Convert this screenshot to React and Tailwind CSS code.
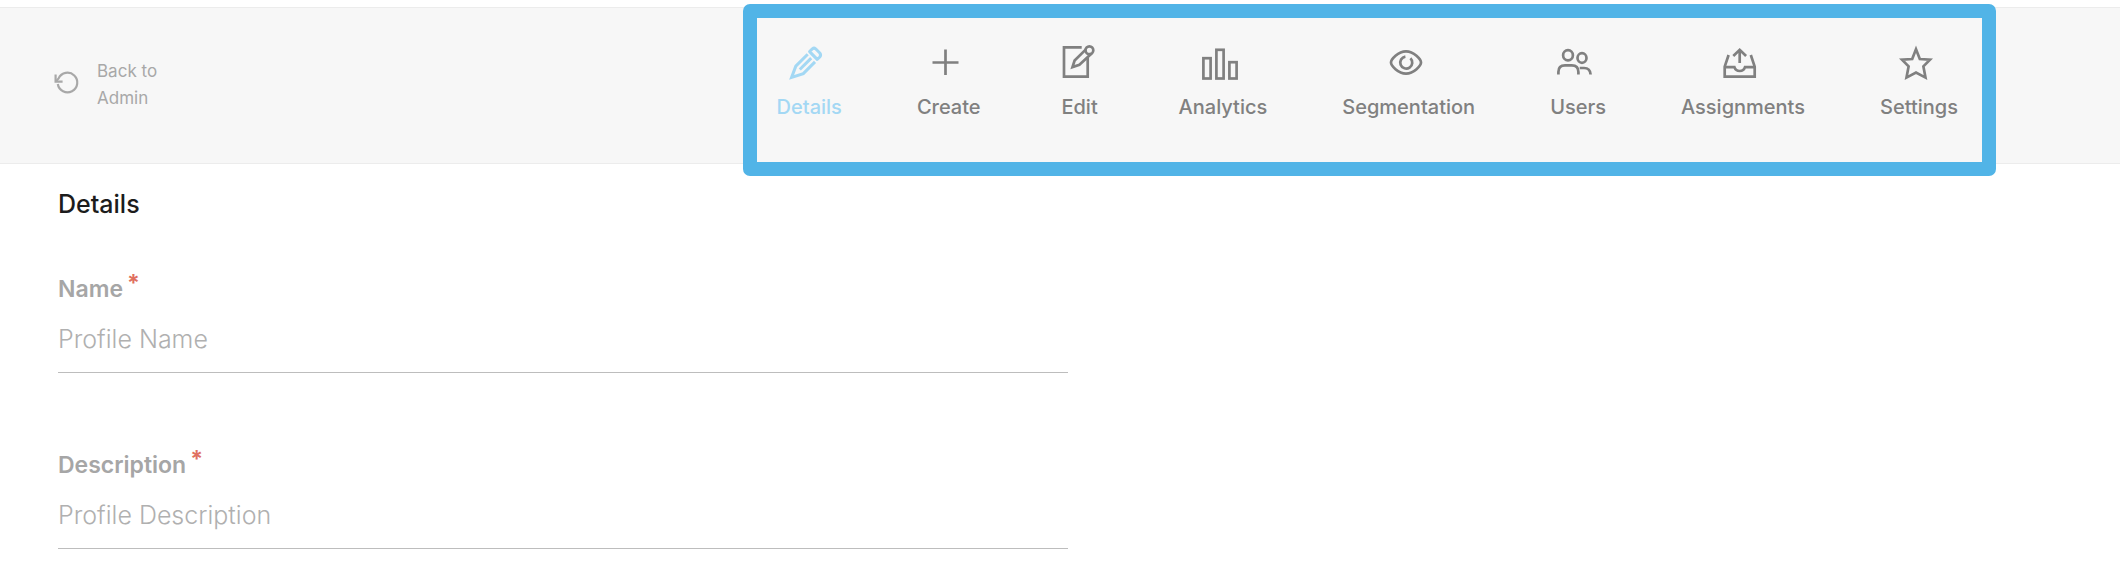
import React from 'react';

const Icon = ({ children }) => (
  <svg
    className="w-10 h-10 mr-1.5"
    viewBox="0 0 40 40"
    fill="none"
    stroke="currentColor"
    strokeWidth="2.7"
    aria-hidden="true"
  >
    {children}
  </svg>
);

const navItems = [
  {
    label: 'Details',
    active: true,
    icon: (
      <>
        <path d="M21.7 11.3 L9.8 23.2 L5.6 34.4 L17.3 30.6 L29 18.9" strokeWidth="3" />
        <path d="M25.2 15.1 L13.8 26.5" strokeWidth="3" />
        <path d="M23.6 8.6 L26.4 5.8 Q28 4.4 29.6 5.8 L33.8 10 Q35.4 12 33.8 14 L31.2 16.4 Z" strokeLinejoin="round" strokeWidth="3" />
      </>
    ),
  },
  {
    label: 'Create',
    icon: <path d="M19.5 6.5 V32 M6.5 19.5 H32.5" />,
  },
  {
    label: 'Edit',
    icon: (
      <>
        <path d="M24.7 4.4 H7 V33.6 H30.7 V14.5" />
        <path d="M28.9 6.4 L17.6 17.6 L15.5 24 L22.4 21.7 L34.6 10.6" />
        <circle cx="32.4" cy="7.2" r="3.9" />
      </>
    ),
  },
  {
    label: 'Analytics',
    icon: (
      <>
        <rect x="3.4" y="15.2" width="7.2" height="20.3" />
        <rect x="16.4" y="6.8" width="7.2" height="28.7" />
        <rect x="29.4" y="19.2" width="7.2" height="16.3" />
      </>
    ),
  },
  {
    label: 'Segmentation',
    icon: (
      <>
        <path d="M5 19.5 C5 16.5 12 8.4 20 8.4 C28 8.4 35 16.5 35 19.5 C35 22.5 28 30.6 20 30.6 C12 30.6 5 22.5 5 19.5 Z" />
        <path d="M19.4 13.6 A6 6 0 1 0 24.4 15.2" />
      </>
    ),
  },
  {
    label: 'Users',
    icon: (
      <>
        <ellipse cx="13" cy="12.3" rx="4.9" ry="5.1" />
        <ellipse cx="27" cy="15" rx="4.5" ry="4.8" />
        <path d="M3.4 31.5 V29 Q3.4 22.4 10 22.4 H16.8 Q23.4 22.4 23.4 29 V31.5" />
        <path d="M24.7 25 H29 Q35.2 25 35.6 31.5" />
      </>
    ),
  },
  {
    label: 'Assignments',
    icon: (
      <>
        <path d="M8.6 12 L4.7 23.6 V33.6 H34.7 V23.6 L30.8 12" />
        <path d="M4.7 24.2 H14.4 Q15.6 28 19.7 28 Q23.8 28 25 24.2 H34.7" />
        <path d="M19.7 20 V7.5 M13.3 13 L19.7 6.8 L26.1 13" />
      </>
    ),
  },
  {
    label: 'Settings',
    icon: (
      <path d="M20 6.3 L23.8 16 L34 16.7 L27.4 23.4 L29.5 34.6 L20 29.6 L10.5 34.6 L12.6 23.4 L6 16.7 L16.2 16 Z" />
    ),
  },
];

const NavItem = ({ label, icon, active }) => (
  <a
    href="#"
    className={
      active
        ? 'flex flex-col items-center min-w-12 text-[#a3d8f4]'
        : 'flex flex-col items-center min-w-12 text-[#808080]'
    }
  >
    <Icon>{icon}</Icon>
    <span className="mt-3 text-[20px] leading-6 font-medium">{label}</span>
  </a>
);

const Field = ({ id, label, placeholder }) => (
  <div className="w-1/2">
    <label htmlFor={id} className="flex text-[23px] leading-8 font-semibold text-[#a6a6a6]">
      {label}
      <span className="ml-1 -mt-1.5 font-bold text-[#e07060]">*</span>
    </label>
    <input
      id={id}
      type="text"
      placeholder={placeholder}
      className="block w-full h-[68px] border-b border-[#bdbdbd] text-[25px] font-light text-gray-800 placeholder:text-[#b0b0b0] outline-none"
    />
  </div>
);

const App = () => {
  return (
    <div className="bg-white pt-[7px] font-['Inter',sans-serif]">
      <header className="flex items-center justify-between h-[157px] pl-[54px] pr-[162px] pb-[10px] bg-[#f7f7f7] border-y border-[#ececec]">
        <a href="#" className="flex items-center gap-[15px] pt-2 text-[#a8a8a8]">
          <svg
            className="w-7 h-7 mb-1"
            viewBox="0 0 28 28"
            fill="none"
            stroke="currentColor"
            strokeWidth="2.2"
            aria-hidden="true"
          >
            <path d="M3.8 15 A9.8 9.8 0 1 0 4.6 9.4 L1.8 12.4" />
            <path d="M1.6 5.4 V12.6 H8.6" />
          </svg>
          <span className="w-20 text-[17px] leading-[27px]">Back to Admin</span>
        </a>

        <nav className="relative flex gap-[75px]">
          {navItems.map((item) => (
            <NavItem key={item.label} {...item} />
          ))}
          <div className="absolute -top-[39px] -bottom-[57px] -left-[34px] -right-[38px] border-14 border-[#51b4e7] rounded-[7px] pointer-events-none" />
        </nav>
      </header>

      <main className="pt-6 pl-[58px] pr-[42px] pb-7">
        <h1 className="text-[25px] leading-8 font-medium text-[#1c1c1c]">Details</h1>
        <form className="flex flex-col gap-[76px] mt-[53px]">
          <Field id="name" label="Name" placeholder="Profile Name" />
          <Field id="description" label="Description" placeholder="Profile Description" />
        </form>
      </main>
    </div>
  );
};

export default App;
